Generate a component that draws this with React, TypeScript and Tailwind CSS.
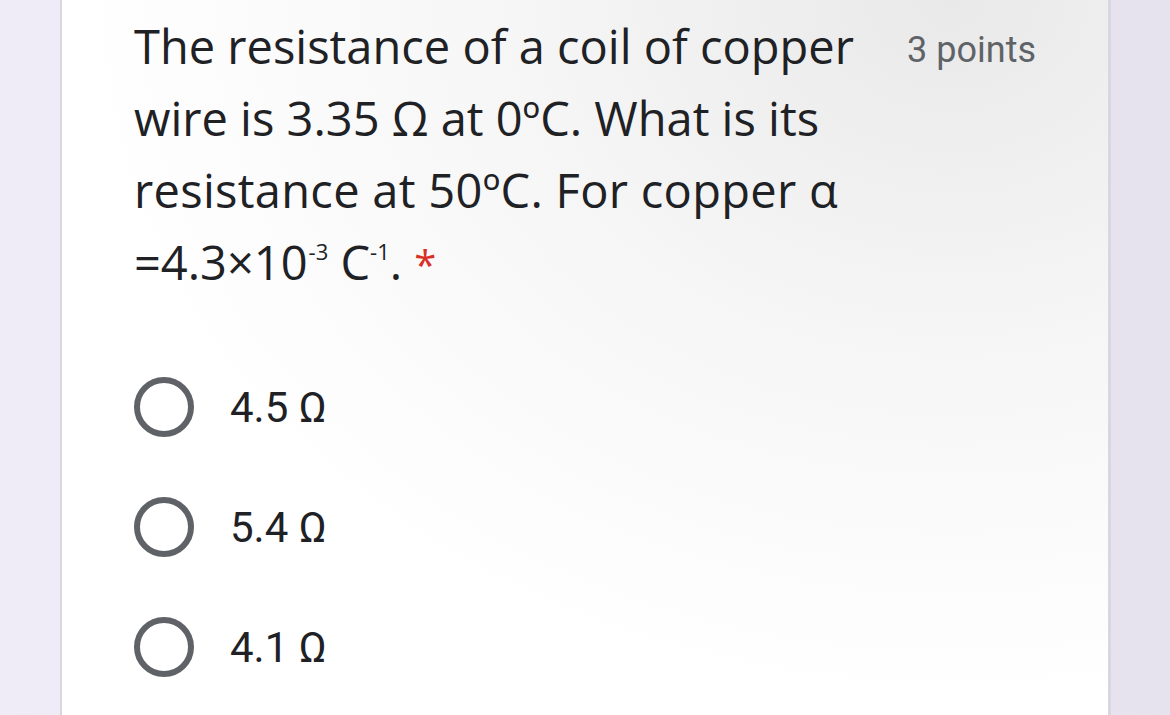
import React from "react";

const options = ["4.5 Ω", "5.4 Ω", "4.1 Ω"];

export default function App() {
  return (
    <div className="w-[1170px] h-[715px] overflow-hidden flex bg-gradient-to-r from-[#efecf7] to-[#e6e3ef]">
      <div className="w-[60px] shrink-0" />
      <div className="w-[1051px] shrink-0 h-full border-l-[2px] border-r-[3px] border-[#d9d7de] bg-[radial-gradient(ellipse_at_85%_0%,#e9e9e9_0%,#f6f6f6_35%,#ffffff_70%)]">
        <div className="flex pl-[72px] pr-[72px] pt-[10px]">
          <div className="text-[47px] leading-[72px] text-[#202124] font-['Open_Sans',sans-serif] whitespace-nowrap">
            <div>The resistance of a coil of copper</div>
            <div>wire is 3.35 Ω at 0ºC. What is its</div>
            <div className="tracking-[0.3px]">resistance at 50ºC. For copper α</div>
            <div>
              =4.3×10<span className="text-[22px] relative -top-[20px] ml-[1px]">-3</span> C
              <span className="text-[22px] relative -top-[20px]">-1</span>.{" "}
              <span className="text-[#d93025] text-[40px]">*</span>
            </div>
          </div>
          <div className="ml-auto pt-[10px] text-[36px] leading-[60px] text-[#5f6368] font-['Roboto',sans-serif] whitespace-nowrap">
            3 points
          </div>
        </div>
        <div className="pl-[72px] pt-[70px] flex flex-col gap-[60px] font-['Roboto',sans-serif]">
          {options.map((o) => (
            <div key={o} className="flex items-center h-[60px]">
              <div className="w-[60px] h-[60px] rounded-full border-[6px] border-[#5f6368]" />
              <div className="ml-[36px] text-[42px] text-[#202124]">{o}</div>
            </div>
          ))}
        </div>
      </div>
      <div className="flex-1" />
    </div>
  );
}
